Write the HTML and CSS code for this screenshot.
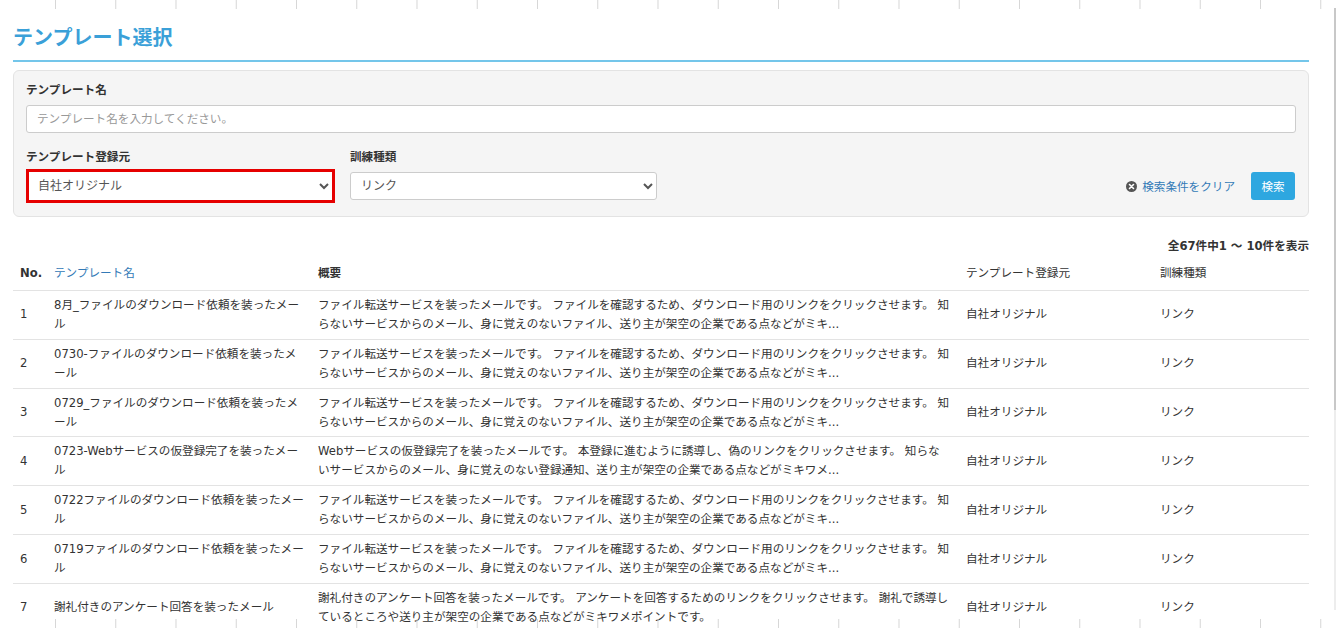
FILE: index.html
```html
<!DOCTYPE html>
<html lang="ja">
<head>
    <meta charset="UTF-8">
    <meta name="viewport" content="width=device-width, initial-scale=1.0">
    <title>テンプレート選択</title>
    <link rel="stylesheet" href="styles.css">
</head>
<body>
    <div class="ruler ruler-top"></div>
    <div class="ruler ruler-bottom"></div>
    <div class="scroll-rail"><div class="scroll-thumb"></div></div>

    <div class="page">
        <h1 class="page-title">テンプレート選択</h1>

        <!-- 検索条件 -->
        <div class="search-panel">
            <div class="form-group">
                <label for="template-name">テンプレート名</label>
                <input type="text" id="template-name" class="form-control" placeholder="テンプレート名を入力してください。">
            </div>
            <div class="search-row">
                <div class="search-col col-source">
                    <label for="template-source">テンプレート登録元</label>
                    <div class="mark-box">
                        <select id="template-source" class="form-control">
                            <option selected>自社オリジナル</option>
                            <option>標準テンプレート</option>
                        </select>
                    </div>
                </div>
                <div class="search-col col-type">
                    <label for="training-type">訓練種類</label>
                    <select id="training-type" class="form-control">
                        <option selected>リンク</option>
                        <option>添付ファイル</option>
                    </select>
                </div>
                <div class="search-actions">
                    <a href="#" class="clear-link">
                        <svg width="11" height="11" viewBox="0 0 11 11">
                            <circle cx="5.5" cy="5.5" r="5.5" fill="#555"/>
                            <path d="M3.5 3.5l4 4M7.5 3.5l-4 4" stroke="#fff" stroke-width="1.6" stroke-linecap="round"/>
                        </svg>
                        検索条件をクリア
                    </a>
                    <button class="btn-search">検索</button>
                </div>
            </div>
        </div>

        <p class="result-count">全67件中1 ～ 10件を表示</p>

        <!-- テンプレート一覧 -->
        <table class="template-table">
            <colgroup>
                <col class="w-no">
                <col class="w-name">
                <col class="w-summary">
                <col class="w-source">
                <col class="w-type">
            </colgroup>
            <thead>
                <tr>
                    <th>No.</th>
                    <th><a href="#" class="sort-link">テンプレート名</a></th>
                    <th>概要</th>
                    <th class="th-plain">テンプレート登録元</th>
                    <th class="th-plain">訓練種類</th>
                </tr>
            </thead>
            <tbody>
                <tr>
                    <td>1</td>
                    <td class="cell-name">8月_ファイルのダウンロード依頼を装ったメール</td>
                    <td class="cell-summary">ファイル転送サービスを装ったメールです。 ファイルを確認するため、ダウンロード用のリンクをクリックさせます。 知らないサービスからのメール、身に覚えのないファイル、送り主が架空の企業である点などがミキ...</td>
                    <td>自社オリジナル</td>
                    <td>リンク</td>
                </tr>
                <tr>
                    <td>2</td>
                    <td class="cell-name">0730-ファイルのダウンロード依頼を装ったメール</td>
                    <td class="cell-summary">ファイル転送サービスを装ったメールです。 ファイルを確認するため、ダウンロード用のリンクをクリックさせます。 知らないサービスからのメール、身に覚えのないファイル、送り主が架空の企業である点などがミキ...</td>
                    <td>自社オリジナル</td>
                    <td>リンク</td>
                </tr>
                <tr>
                    <td>3</td>
                    <td class="cell-name">0729_ファイルのダウンロード依頼を装ったメール</td>
                    <td class="cell-summary">ファイル転送サービスを装ったメールです。 ファイルを確認するため、ダウンロード用のリンクをクリックさせます。 知らないサービスからのメール、身に覚えのないファイル、送り主が架空の企業である点などがミキ...</td>
                    <td>自社オリジナル</td>
                    <td>リンク</td>
                </tr>
                <tr>
                    <td>4</td>
                    <td class="cell-name">0723-Webサービスの仮登録完了を装ったメール</td>
                    <td class="cell-summary">Webサービスの仮登録完了を装ったメールです。 本登録に進むように誘導し、偽のリンクをクリックさせます。 知らないサービスからのメール、身に覚えのない登録通知、送り主が架空の企業である点などがミキワメ...</td>
                    <td>自社オリジナル</td>
                    <td>リンク</td>
                </tr>
                <tr>
                    <td>5</td>
                    <td class="cell-name">0722ファイルのダウンロード依頼を装ったメール</td>
                    <td class="cell-summary">ファイル転送サービスを装ったメールです。 ファイルを確認するため、ダウンロード用のリンクをクリックさせます。 知らないサービスからのメール、身に覚えのないファイル、送り主が架空の企業である点などがミキ...</td>
                    <td>自社オリジナル</td>
                    <td>リンク</td>
                </tr>
                <tr>
                    <td>6</td>
                    <td class="cell-name">0719ファイルのダウンロード依頼を装ったメール</td>
                    <td class="cell-summary">ファイル転送サービスを装ったメールです。 ファイルを確認するため、ダウンロード用のリンクをクリックさせます。 知らないサービスからのメール、身に覚えのないファイル、送り主が架空の企業である点などがミキ...</td>
                    <td>自社オリジナル</td>
                    <td>リンク</td>
                </tr>
                <tr>
                    <td>7</td>
                    <td class="cell-name">謝礼付きのアンケート回答を装ったメール</td>
                    <td class="cell-summary">謝礼付きのアンケート回答を装ったメールです。 アンケートを回答するためのリンクをクリックさせます。 謝礼で誘導しているところや送り主が架空の企業である点などがミキワメポイントです。</td>
                    <td>自社オリジナル</td>
                    <td>リンク</td>
                </tr>
            </tbody>
        </table>
    </div>
</body>
</html>
```

FILE: styles.css
```css
* {
    margin: 0;
    padding: 0;
    box-sizing: border-box;
}

body {
    font-family: "DejaVu Sans", "Noto Sans CJK JP", sans-serif;
    font-size: 11.6px;
    color: #333;
    background-color: #fff;
    overflow: hidden;
}

/* 目盛り（上下の枠） */
.ruler {
    position: fixed;
    left: 0;
    right: 0;
    height: 9px;
    background-image: linear-gradient(to right, #d6d6d6 0, #d6d6d6 1px, transparent 1px);
    background-size: 60.25px 100%;
    background-position: 55px 0;
    background-repeat: repeat-x;
    z-index: 10;
}

.ruler-top {
    top: 0;
}

.ruler-bottom {
    bottom: 0;
}

.scroll-rail {
    position: fixed;
    top: 8px;
    bottom: 18px;
    right: 1px;
    width: 2px;
    background-color: #ededed;
}

.scroll-thumb {
    height: 402px;
    background-color: #c8c8c8;
}

.page {
    padding: 23px 28px 0 13px;
}

.page-title {
    font-family: "Noto Sans CJK JP", sans-serif;
    font-size: 20px;
    line-height: 28px;
    font-weight: bold;
    color: #3aa0d8;
    padding-bottom: 9px;
    border-bottom: 2px solid #74c6ea;
    margin-bottom: 8px;
}

/* 検索パネル */
.search-panel {
    background-color: #f5f5f5;
    border: 1px solid #e3e3e3;
    border-radius: 6px;
    padding: 11px 12px 16px;
}

.search-panel label {
    display: block;
    font-weight: bold;
    line-height: 17px;
    margin-bottom: 6px;
}

.form-group {
    margin-bottom: 16px;
}

.form-control {
    display: block;
    height: 28px;
    border: 1px solid #ccc;
    border-radius: 3px;
    background-color: #fff;
    font: inherit;
    color: #555;
    padding: 0 10px;
}

input.form-control {
    width: 100%;
}

input.form-control::placeholder {
    color: #999;
}

select.form-control {
    font-size: 12px;
    padding: 0 6px;
}

.search-row {
    display: flex;
    align-items: flex-end;
}

.col-source {
    width: 324px;
}

.search-panel .col-source label {
    margin-bottom: 3px;
}

/* 赤枠で囲んだ登録元セレクト */
.mark-box {
    width: 309px;
    border: 3px solid #e60000;
    margin-bottom: -3px;
}

.mark-box select {
    width: 100%;
    border: none;
    border-radius: 0;
    padding-left: 5px;
}

.col-type {
    width: 307px;
}

.col-type select {
    width: 100%;
}

.search-actions {
    margin-left: auto;
    margin-right: 1px;
    display: flex;
    align-items: center;
    gap: 16px;
}

.clear-link {
    display: flex;
    align-items: center;
    gap: 5px;
    color: #337ab7;
    text-decoration: none;
}

.btn-search {
    width: 44px;
    height: 28px;
    border: none;
    border-radius: 3px;
    background-color: #2ea7e0;
    color: #fff;
    font: inherit;
    cursor: pointer;
}

.result-count {
    margin-top: 21px;
    line-height: 17px;
    text-align: right;
    font-weight: bold;
}

/* 一覧テーブル */
.template-table {
    width: 100%;
    table-layout: fixed;
    border-collapse: collapse;
}

.w-no { width: 34px; }
.w-name { width: 264px; }
.w-summary { width: 648px; }
.w-source { width: 194px; }
.w-type { width: 156px; }

.template-table th {
    text-align: left;
    font-weight: bold;
    line-height: 17px;
    padding: 10px 7px 8px;
    border-bottom: 1px solid #e3e3e3;
}

.template-table th.th-plain {
    font-weight: normal;
}

.sort-link {
    color: #337ab7;
    font-weight: normal;
    text-decoration: none;
}

.template-table td {
    line-height: 18.9px;
    padding: 5px 7px;
    vertical-align: middle;
    border-bottom: 1px solid #e3e3e3;
}

.template-table td.cell-name {
    padding-right: 5px;
}

.template-table td.cell-summary {
    padding-right: 8.7px;
}
```
